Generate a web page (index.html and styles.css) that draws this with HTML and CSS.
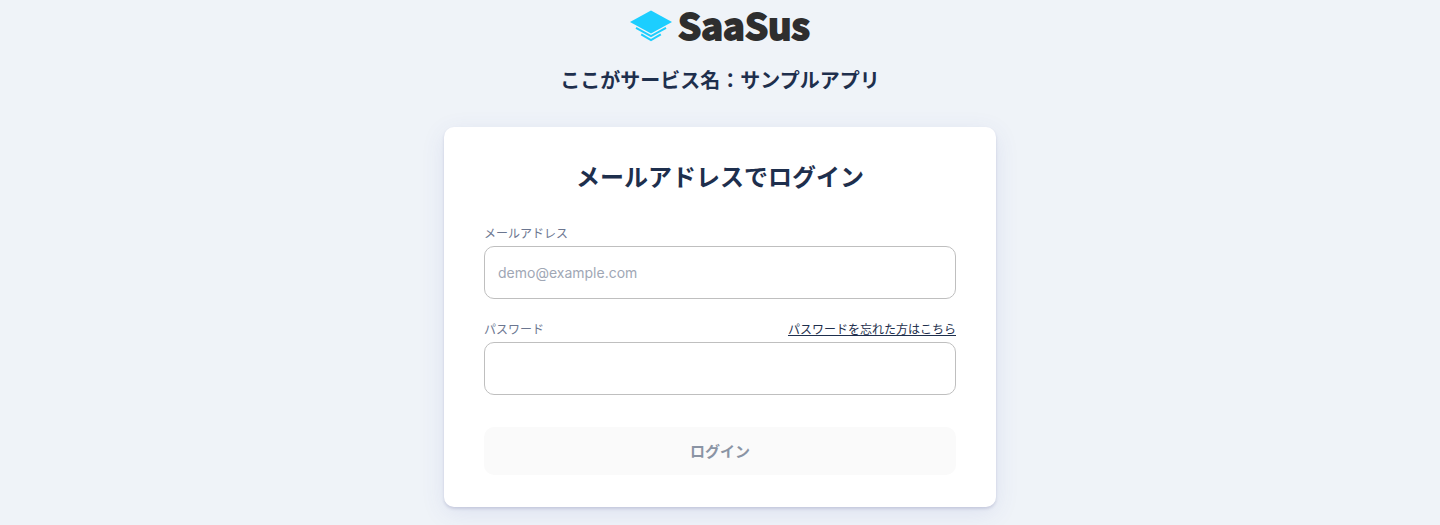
FILE: index.html
```html
<!DOCTYPE html>
<html lang="ja">
<head>
<meta charset="utf-8">
<meta name="viewport" content="width=device-width, initial-scale=1">
<title>ログイン</title>
<link rel="stylesheet" href="styles.css">
</head>
<body>
<main class="page">
  <header class="brand">
    <div class="logo">
      <svg class="logo-mark" viewBox="0 0 42 32" aria-hidden="true">
        <path class="logo-top" d="M21 0.500 42 12 21 23.500 0 12Z"/>
        <path class="logo-layer" d="M6 17.800 21 26.200 36 17.800"/>
        <path class="logo-layer" d="M11.200 24.300 21 30.200 30.800 24.300"/>
      </svg>
      <span class="logo-text">SaaSus</span>
    </div>
    <p class="service">ここがサービス名：サンプルアプリ</p>
  </header>
  <form class="card">
    <h1 class="title">メールアドレスでログイン</h1>
    <div class="field">
      <div class="field-head"><label for="email">メールアドレス</label></div>
      <input class="input" id="email" type="email" placeholder="demo@example.com">
    </div>
    <div class="field">
      <div class="field-head">
        <label for="password">パスワード</label>
        <a class="forgot" href="#">パスワードを忘れた方はこちら</a>
      </div>
      <input class="input" id="password" type="password">
    </div>
    <button class="submit" type="submit" disabled>ログイン</button>
  </form>
</main>
</body>
</html>
```
FILE: styles.css
```css
* {
  box-sizing: border-box;
}

body {
  margin: 0;
  background: #eff3f8;
  color: #1e2f4d;
  font-family: Inter, "Noto Sans CJK JP", sans-serif;
}

.page {
  display: flex;
  flex-direction: column;
  align-items: center;
  padding: 0 16px 18px;
}

.brand {
  display: flex;
  flex-direction: column;
  align-items: center;
  gap: 17px;
  margin-bottom: 30px;
}

.logo {
  display: flex;
  align-items: center;
  gap: 6px;
}

.logo-mark {
  width: 42px;
  height: 32px;
  margin-top: 4px;
}

.logo-top {
  fill: #1cceff;
}

.logo-layer {
  fill: none;
  stroke: #1cceff;
  stroke-width: 2;
}

.logo-text {
  color: #2e2e2e;
  font-family: "Noto Sans CJK JP", sans-serif;
  font-size: 37px;
  font-weight: 700;
  line-height: 48px;
  -webkit-text-stroke: 2px #2e2e2e;
  stroke-linejoin: round;
}

.service {
  margin: 0;
  font-size: 20px;
  font-weight: 700;
  line-height: 32px;
}

.card {
  width: 100%;
  max-width: 552px;
  padding: 33px 40px 32px;
  border-radius: 10px;
  background: #fff;
  box-shadow: 0 2px 3px rgba(50, 50, 110, 0.16), 0 6px 24px rgba(70, 80, 180, 0.1);
}

.title {
  margin: 0 0 28px;
  font-size: 24px;
  font-weight: 700;
  line-height: 36px;
  text-align: center;
}

.field {
  margin-bottom: 21px;
}

.field-head {
  display: flex;
  justify-content: space-between;
  margin-bottom: 2px;
  color: #6b7690;
  font-size: 12px;
  line-height: 20px;
}

.forgot {
  color: #1e2f4d;
  text-decoration: underline;
  text-underline-offset: 1px;
}

.input {
  display: block;
  width: 100%;
  height: 53px;
  padding: 0 13px;
  border: 1px solid #bfbfbf;
  border-radius: 10px;
  background: #fff;
  color: #1e2f4d;
  font-family: inherit;
  font-size: 14px;
}

.input::placeholder {
  color: #a0a7b5;
}

.submit {
  display: block;
  width: 100%;
  height: 48px;
  margin-top: 32px;
  padding: 0 0 2px;
  border: 0;
  border-radius: 10px;
  background: #fafafa;
  color: #8a94a4;
  font-family: inherit;
  font-size: 15px;
  font-weight: 700;
}
```
